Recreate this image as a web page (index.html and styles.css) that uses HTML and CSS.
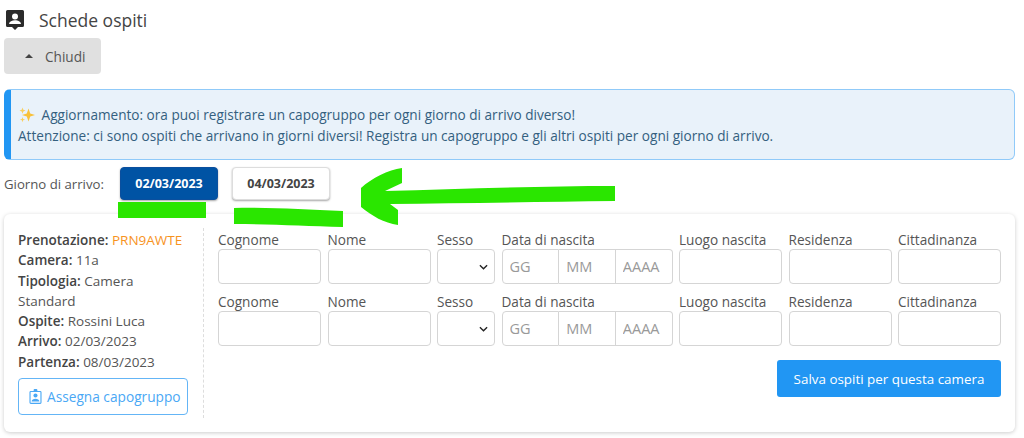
FILE: index.html
```html
<!DOCTYPE html>
<html lang="it">
<head>
    <meta charset="UTF-8">
    <title>Schede ospiti</title>
    <link rel="stylesheet" href="styles.css">
</head>
<body>

    <!-- Header -->
    <h2 class="page-title">
        <svg class="title-icon" viewBox="0 0 20 22"><path fill="#2b2b2b" d="M2.500 1h15A1.500 1.500 0 0 1 19 2.500v14a1.500 1.500 0 0 1-1.500 1.500H13l-3 3-3-3H2.500A1.500 1.500 0 0 1 1 16.500v-14A1.500 1.500 0 0 1 2.500 1z"/><circle cx="10" cy="7.500" r="3" fill="#fff"/><path fill="#fff" d="M4 15c.3-2.500 3-3.700 6-3.700s5.700 1.200 6 3.700z"/></svg>
        Schede ospiti
    </h2>
    <button class="toggle-btn"><span class="caret"></span>Chiudi</button>

    <!-- Alert -->
    <div class="alert">
        <p><svg class="sparkle" viewBox="0 0 16 16"><path fill="#f8c13a" d="M9.500 1.500l1.700 5 4.800 1.500-4.800 1.600-1.700 4.900-1.700-4.900L3 8l4.800-1.500z"/><path fill="#f9cf5e" d="M3.500 .5l.8 2.300 2.200.8-2.200.8-.8 2.300-.8-2.300-2.200-.8 2.200-.8zM3.500 10l.7 1.900 1.900.7-1.900.7-.7 1.900-.7-1.900-1.900-.7 1.900-.7z"/></svg> Aggiornamento: ora puoi registrare un capogruppo per ogni giorno di arrivo diverso!</p>
        <p>Attenzione: ci sono ospiti che arrivano in giorni diversi! Registra un capogruppo e gli altri ospiti per ogni giorno di arrivo.</p>
    </div>

    <!-- Date selection -->
    <div class="date-row">
        <span class="date-label">Giorno di arrivo:</span>
        <button class="date-btn active">02/03/2023</button>
        <button class="date-btn">04/03/2023</button>
    </div>

    <!-- Room card -->
    <div class="card">
        <div class="info">
            <div><b>Prenotazione:</b> <span class="code">PRN9AWTE</span></div>
            <div><b>Camera:</b> 11a</div>
            <div><b>Tipologia:</b> Camera Standard</div>
            <div><b>Ospite:</b> Rossini Luca</div>
            <div><b>Arrivo:</b> 02/03/2023</div>
            <div><b>Partenza:</b> 08/03/2023</div>
            <button class="assign-btn">
                <svg class="assign-icon" viewBox="0 0 14 16"><path fill="#4aa8f5" d="M2 2h3V1a1 1 0 0 1 1-1h2a1 1 0 0 1 1 1v1h3a1.500 1.500 0 0 1 1.500 1.500v11A1.500 1.500 0 0 1 12 16H2a1.500 1.500 0 0 1-1.500-1.500v-11A1.500 1.500 0 0 1 2 2zm0 1.200a.4.4 0 0 0-.3.300v11c0 .2.100.3.300.300h10c.2 0 .3-.1.300-.3v-11a.4.4 0 0 0-.3-.3z"/><circle cx="7" cy="7" r="2.200" fill="#4aa8f5"/><path fill="#4aa8f5" d="M2.800 13.500c.2-2 2-3 4.200-3s4 1 4.200 3z"/></svg>
                Assegna capogruppo
            </button>
        </div>

        <div class="guests">
            <div class="guest-row">
                <label class="field"><span>Cognome</span><input type="text"></label>
                <label class="field"><span>Nome</span><input type="text"></label>
                <label class="field"><span>Sesso</span><select><option></option></select></label>
                <div class="field"><span>Data di nascita</span>
                    <div class="birth">
                        <input type="text" placeholder="GG">
                        <input type="text" placeholder="MM">
                        <input type="text" placeholder="AAAA">
                    </div>
                </div>
                <label class="field"><span>Luogo nascita</span><input type="text"></label>
                <label class="field"><span>Residenza</span><input type="text"></label>
                <label class="field"><span>Cittadinanza</span><input type="text"></label>
            </div>
            <div class="guest-row">
                <label class="field"><span>Cognome</span><input type="text"></label>
                <label class="field"><span>Nome</span><input type="text"></label>
                <label class="field"><span>Sesso</span><select><option></option></select></label>
                <div class="field"><span>Data di nascita</span>
                    <div class="birth">
                        <input type="text" placeholder="GG">
                        <input type="text" placeholder="MM">
                        <input type="text" placeholder="AAAA">
                    </div>
                </div>
                <label class="field"><span>Luogo nascita</span><input type="text"></label>
                <label class="field"><span>Residenza</span><input type="text"></label>
                <label class="field"><span>Cittadinanza</span><input type="text"></label>
            </div>
            <div class="save-row">
                <button class="save-btn">Salva ospiti per questa camera</button>
            </div>
        </div>
    </div>

    <!-- Green marker drawn over the screenshot -->
    <svg class="marker" viewBox="0 0 1024 438">
        <path fill="#2ae600" d="M118 202h88v16h-88zM234 208c40-1 70 2 109 3v16c-38-1-70-3-109-3z"/>
        <path fill="#2ae600" d="M361 188C372 178 388 170 402 168V183L385 191C460 189 540 186 615 186V201C540 202 460 203 390 204L398 210V225C384 223 372 216 361 207z"/>
    </svg>

</body>
</html>
```

FILE: styles.css
```css
body {
    margin: 0;
    padding: 0 9px 0 4px;
    font-family: "Open Sans", "Noto Sans", sans-serif;
    font-size: 13.6px;
    color: #555;
    background: #fff;
    position: relative;
    height: 438px;
    box-sizing: border-box;
    overflow: hidden;
}

button {
    font-family: inherit;
    cursor: pointer;
}

/* Header */
.page-title {
    display: flex;
    align-items: center;
    gap: 14px;
    height: 38px;
    margin: 0;
    padding: 2px 0 0 1px;
    box-sizing: border-box;
    font-size: 17.500px;
    font-weight: 400;
    color: #444;
}

.title-icon {
    width: 20px;
    height: 22px;
}

.toggle-btn {
    display: flex;
    align-items: center;
    width: 97px;
    height: 36px;
    padding: 0 0 0 21px;
    border: 0;
    border-radius: 4px;
    background: #e0e0e0;
    color: #555;
    font-size: 13.6px;
}

.caret {
    width: 0;
    height: 0;
    margin-right: 12px;
    border-left: 4px solid transparent;
    border-right: 4px solid transparent;
    border-bottom: 4px solid #444;
}

/* Alert */
.alert {
    height: 71px;
    margin-top: 15px;
    padding: 15px 8px 0 7px;
    box-sizing: border-box;
    border: 1px solid #90caf9;
    border-left: 7px solid #2196f3;
    border-radius: 6px;
    background: #e9f2fa;
    color: #34607f;
    line-height: 20.500px;
}

.alert p {
    margin: 0;
}

.sparkle {
    width: 16px;
    height: 16px;
    margin: 0 3px 0 1px;
    vertical-align: -3px;
}

/* Date selection */
.date-row {
    display: flex;
    align-items: center;
    height: 33px;
    margin-top: 7px;
}

.date-label {
    width: 116px;
    flex: none;
    font-size: 13.200px;
}

.date-btn {
    width: 98px;
    height: 33px;
    margin-right: 14px;
    padding: 0;
    border: 1px solid #ddd;
    border-radius: 4px;
    background: #fff;
    box-shadow: 0 1px 2px rgba(0, 0, 0, .35);
    color: #444;
    font-size: 12.500px;
    font-weight: 700;
}

.date-btn.active {
    border-color: #0b4f9e;
    background: #0053a4;
    color: #fff;
}

/* Room card */
.card {
    display: flex;
    height: 218px;
    margin-top: 14px;
    padding: 14px;
    box-sizing: border-box;
    border-radius: 6px;
    background: #fff;
    box-shadow: 0 1px 4px rgba(0, 0, 0, .2);
}

.info {
    width: 186px;
    flex: none;
    padding: 2px 20px 0 0;
    box-sizing: border-box;
    border-right: 1px dashed #ddd;
    line-height: 20.300px;
    font-size: 13.500px;
}

.info b {
    font-weight: 600;
    color: #444;
}

.code {
    color: #f7931e;
}

.assign-btn {
    display: flex;
    align-items: center;
    gap: 5px;
    width: 170px;
    height: 37px;
    margin-top: 6px;
    padding: 0 0 0 10px;
    border: 1px solid #64b5f6;
    border-radius: 4px;
    background: #fff;
    color: #4aa8f5;
    font-size: 13.700px;
    white-space: nowrap;
}

.assign-icon {
    width: 13px;
    height: 15px;
    flex: none;
}

.guests {
    flex: 1;
    min-width: 0;
    padding-left: 14px;
}

.guest-row {
    display: grid;
    grid-template-columns: 103px 103px 58px 171px 103px 103px 103px;
    column-gap: 6.500px;
    margin-bottom: 6px;
}

.field {
    display: block;
    min-width: 0;
}

.field > span {
    display: block;
    height: 21px;
    line-height: 24px;
    white-space: nowrap;
}

input, select {
    display: block;
    width: 100%;
    height: 35px;
    box-sizing: border-box;
    border: 1px solid #d5d5d5;
    border-radius: 4px;
    background-color: #fff;
    font-family: inherit;
    font-size: 13.6px;
}

select {
    padding: 0 4px;
    color: #222;
    appearance: none;
    background-image: url("data:image/svg+xml,%3Csvg xmlns='http://www.w3.org/2000/svg' viewBox='0 0 10 6'%3E%3Cpath d='M1 1l4 4 4-4' fill='none' stroke='%23222' stroke-width='1.500'/%3E%3C/svg%3E");
    background-repeat: no-repeat;
    background-position: right 6px center;
    background-size: 9px 6px;
}

.birth {
    display: flex;
}

.birth input {
    flex: 1;
    min-width: 0;
    padding: 0 7px;
    border-radius: 0;
    border-left: 0;
    font-size: 14.500px;
}

.birth input:first-child {
    border-left: 1px solid #d5d5d5;
    border-radius: 4px 0 0 4px;
}

.birth input:last-child {
    border-radius: 0 4px 4px 0;
}

.birth input::placeholder {
    color: #999;
}

.save-row {
    display: flex;
    justify-content: flex-end;
    margin-top: 14px;
}

.save-btn {
    width: 224px;
    height: 37px;
    padding: 0;
    border: 0;
    border-radius: 3px;
    background: #2196f3;
    color: #fff;
    font-size: 13.400px;
}

/* Marker overlay */
.marker {
    position: absolute;
    left: 0;
    top: 0;
    width: 1024px;
    height: 438px;
    pointer-events: none;
}
```
